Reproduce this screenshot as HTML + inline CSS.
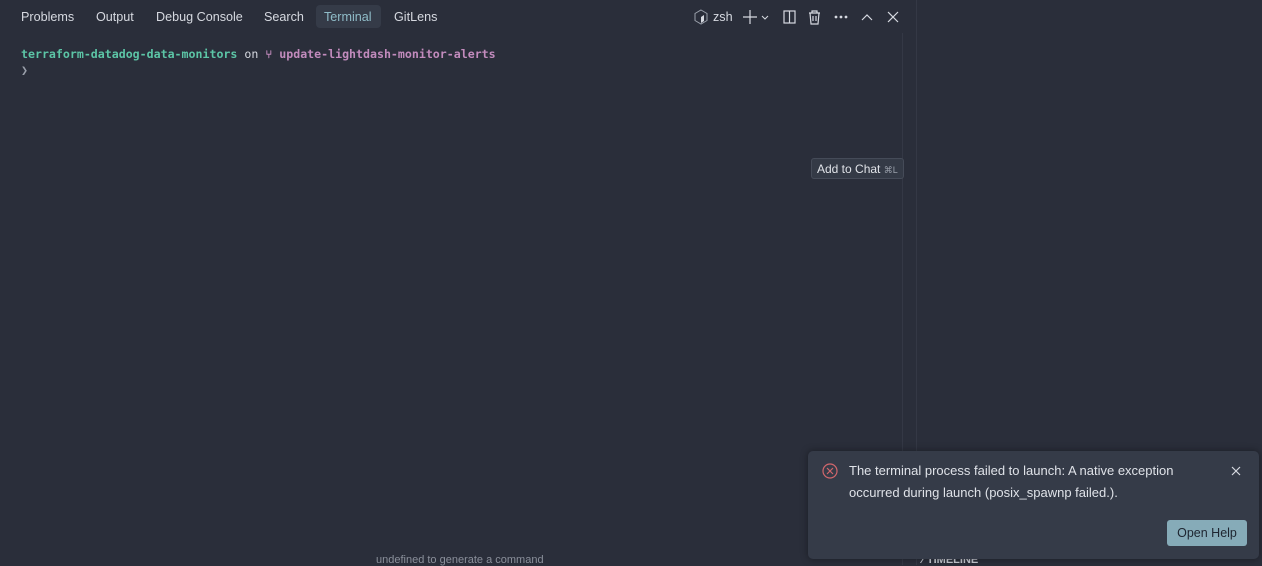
<!DOCTYPE html>
<html><head><style>
*{margin:0;padding:0;box-sizing:border-box}
body{width:1262px;height:565px;overflow:hidden;background:#2a2e3a;font-family:"Liberation Sans",sans-serif;position:relative;color:#c8ccd4}
.tab{position:absolute;top:10px;font-size:12.6px;color:#d6d9e0}
.mono{font-family:"DejaVu Sans Mono","Liberation Mono",monospace;font-size:11.6px;font-weight:bold}
.abs{position:absolute}
</style></head><body>
<div class="abs" style="left:916px;top:0;width:1px;height:565px;background:#343845"></div>
<div class="abs" style="left:902px;top:33px;width:1px;height:532px;background:#343845"></div>
<div class="abs" style="left:316px;top:5px;width:65px;height:23px;background:#353b48;border-radius:4px"></div>
<span class="tab" style="left:21px">Problems</span>
<span class="tab" style="left:96px">Output</span>
<span class="tab" style="left:156px">Debug Console</span>
<span class="tab" style="left:264px">Search</span>
<span class="tab" style="left:324px;color:#8fbcc8">Terminal</span>
<span class="tab" style="left:394px">GitLens</span>
<svg class="abs" style="left:694px;top:9px" width="14" height="16" viewBox="0 0 14 16"><path d="M7 1L13 4.5V11.5L7 15L1 11.5V4.5Z" fill="none" stroke="#9aa0ab" stroke-width="1"/><path d="M7 8L10 6V12L7 14Z" fill="#d6d9e0"/></svg>
<span class="tab" style="left:713px">zsh</span>
<svg class="abs" style="left:740px;top:8px" width="140" height="18" fill="none" stroke="#d6d9e0" stroke-width="1.2">
<path d="M10 2V16M3 9H17"/><path d="M22 8L25 11L28 8" stroke-width="1"/>
<rect x="44" y="3" width="11" height="12"/><path d="M49.5 3V15"/>
<path d="M69 5H80M72 5V3H77V5M70 5L71 16H78L79 5M73 8V13M76 8V13"/>
<circle cx="96" cy="9" r=".8" fill="#d6d9e0"/><circle cx="101" cy="9" r=".8" fill="#d6d9e0"/><circle cx="106" cy="9" r=".8" fill="#d6d9e0"/>
<path d="M122 12L127 7L132 12"/>
</svg>
<svg class="abs" style="left:887px;top:11px" width="12" height="12" stroke="#d6d9e0" stroke-width="1.2"><path d="M1 1L11 11M11 1L1 11"/></svg>
<div class="abs mono" style="left:21px;top:47px;white-space:pre"><span style="color:#5cc5a6">terraform-datadog-data-monitors</span><span style="color:#d6d9e0;font-weight:normal"> on </span><span style="color:#c28bbd">⑂ update-lightdash-monitor-alerts</span></div>
<div class="abs mono" style="left:21px;top:63px;color:#9aa0ab;font-weight:normal">❯</div>
<div class="abs" style="left:811px;top:158px;width:93px;height:21px;background:#343a46;border:1px solid #454b58;border-radius:3px;font-size:12px;color:#e0e3e8;padding:3px 0 0 5px">Add to Chat <span style="font-size:9px;color:#9aa0ab">⌘L</span></div>
<div class="abs" style="left:376px;top:554px;font-size:11px;color:#8a8f9a">undefined to generate a command</div>
<div class="abs" style="left:922px;top:554px;font-size:11px;font-weight:bold;color:#c8ccd4">⁄ TIMELINE</div>
<div class="abs" style="left:808px;top:451px;width:451px;height:108px;background:#353b48;border-radius:5px;box-shadow:0 0 8px rgba(0,0,0,.4)">
<svg class="abs" style="left:14px;top:12px" width="16" height="16" fill="none" stroke="#d2676c" stroke-width="1.2"><circle cx="8" cy="8" r="7"/><path d="M5 5L11 11M11 5L5 11"/></svg>
<div class="abs" style="left:41px;top:9px;font-size:13px;line-height:22px;color:#dfe2e8;width:350px">The terminal process failed to launch: A native exception occurred during launch (posix_spawnp failed.).</div>
<svg class="abs" style="left:423px;top:15px" width="10" height="10" stroke="#d6d9e0" stroke-width="1.2"><path d="M1 1L9 9M9 1L1 9"/></svg>
<div class="abs" style="left:359px;top:69px;width:80px;height:26px;background:#86abb8;border-radius:3px;color:#1e2530;font-size:12.5px;text-align:center;line-height:26px">Open Help</div>
</div>
</body></html>
